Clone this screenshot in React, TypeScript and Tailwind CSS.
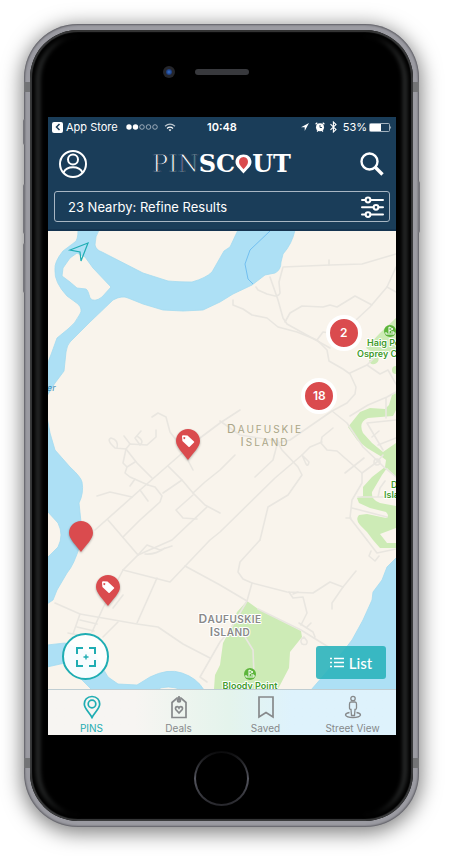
import React from "react";

const ROADS = [
  "M396 254 L362 264 L330 265 L283 267 L279 282 L280 293 Q279 296 275 296 L267 294 L258 290 L256 287",
  "M329 260 V265",
  "M270 277 L278 300 L283 318 L287 324 L330 348",
  "M233 300 V305 L243 309 L252 315 L267 318 L278 327 L297 332 L317 340 L327 350 L329 361 L343 369 L350 374 L356 387 L355 394 L347 403 L332 411 L290 440 L278 443",
  "M396 267 L387 287 L370 307 L356 320",
  "M387 287 L396 292",
  "M372 305 L355 296 L337 307 L330 305 L323 307 L302 306 L290 313 L285 322",
  "M317 340 L323 332 L330 333",
  "M350 373 L367 365 L374 358 M367 365 L380 374 L388 370 L396 384",
  "M332 411 L347 423 L363 447 L385 468 L396 477",
  "M350 416 L368 405 L387 397 L396 392",
  "M386 398 V418",
  "M396 420 L367 423 L383 450",
  "M378 445 L396 438 M372 437 L379 431",
  "M333 428 L322 437 L321 443 L327 450 L337 451 L362 473 L362 483 L352 500 L350 518 L367 540",
  "M345 473 L364 458",
  "M362 473 L377 462 L383 455",
  "M352 508 L387 517 M346 518 H351",
  "M358 497 H396 M378 497 L380 488 L385 481",
  "M322 442 L310 447 L302 455 L275 478 L220 532 L210 540 L170 582 L123 570",
  "M302 455 L306 464 Q308 467 309 462 L303 456",
  "M157 578 L137 623",
  "M185 566 L220 585 L247 601",
  "M55 603 L80 614 L137 624 L158 627 L183 644 L210 658",
  "M247 601 L230 630 L220 642 L200 677 L207 682",
  "M240 410 L220 423 L200 438 L180 455 L140 490 L95 530",
  "M108 520 L138 555",
  "M123 570 L138 555 L172 540 L207 507",
  "M123 537 L140 520 L160 502 L162 496 L155 487 L148 485",
  "M168 466 L182 480 L193 493 L205 505 L220 513",
  "M193 493 L205 482 L220 470 L235 455",
  "M182 480 L163 493",
  "M197 519 L183 518 L176 510 L193 495",
  "M152 417 L158 413 L166 417 L170 432 L180 445 L193 470",
  "M152 478 L137 463 L126 449 L115 448 Q106 440 111 438 Q119 440 117 448",
  "M126 449 L130 444 L147 445 L156 437 V430",
  "M124 436 L130 444 M141 431 L135 438 L140 445 Q145 441 137 436",
  "M126 449 L123 463 L127 467 L125 473 L130 477 L148 485 M127 467 L135 462 M130 486 L135 479",
  "M97 496 L110 492 L132 497",
  "M140 490 L148 501",
  "M123 570 L103 608 L92 632 M123 595 L113 608",
  "M80 614 L73 634 L90 637 M80 620 L97 624 M77 627 L94 631 M68 633 L73 634",
  "M118 622 L103 637",
  "M138 555 L147 545 L160 550 L172 546 M145 554 Q155 555 165 548",
  "M260 540 L240 562 L238 572 L243 579 L252 583 L247 601",
  "M260 540 L268 507 L288 495 L302 475 L298 467 L282 450 L278 443",
  "M220 421 L240 435 L278 441 L273 460 L255 477",
  "M252 583 L287 592 L313 593 L330 582 L343 587 L356 571",
  "M343 587 L332 603 V609",
  "M289 592 L293 598 L303 597 L307 613 L301 625 M293 594 L298 592",
  "M258 609 L301 630 L330 648 M299 623 L313 632 L315 637 M307 627 L311 623",
  "M304 637 Q299 640 302 644 Q308 646 307 641 L304 637",
  "M367 540 L377 553 L396 549 M371 551 L369 556 L375 561 L379 556",
  "M245 637 L253 650 L254 675",
];

const teal = "#1fadb3";

function MapDrawing() {
  return (
    <svg viewBox="48 231 348 458" className="block w-full" aria-label="Map of Daufuskie Island" role="img">
      <rect x="48" y="231" width="348" height="458" fill="#f9f4ec" />
      <g fill="#cdebb6">
        <path d="M396 318 L380 333 L366 348 L372 352 L396 352Z" />
        <ellipse cx="374" cy="360" rx="5" ry="4" transform="rotate(-35 374 360)" />
        <circle cx="396" cy="370" r="4" />
        <path d="M396 393 L392 395 L389 405 L385 409 L370 408 L360 412 L348 427 L357 440 L367 448 L382 457 L386 460 L385 467 L372 477 L363 487 L363 496 L357 498 L359 503 L370 508 L386 512 Q390 516 386 518 L367 514 L359 515 Q355 519 360 525 L367 532 L373 540 L380 548 L396 548 V543 L387 543 L380 534 L396 528 V506 L380 503 Q371 500 372 492 L382 475 L387 468 L396 477 V443 L383 452 L372 443 L363 433 Q358 422 368 418 L393 416 L396 410Z" />
        <path d="M247 601 L258 609 L301 631 L302 637 L290 652 L289 668 L278 689 H214 L215 675 L220 665 L223 643 L230 630 L237 612Z" />
      </g>
      <g stroke="#e9e6e0" strokeWidth="1.6" fill="none" strokeLinejoin="round" strokeLinecap="round">
        {ROADS.map((d) => (
          <path key={d} d={d} />
        ))}
        <circle cx="377" cy="462" r="3" />
      </g>
      <g fill="#ade0f5" stroke="#a3daf0" strokeWidth="0.8" strokeLinejoin="round">
        <path
          fillRule="evenodd"
          d="M78 230 Q78 240 75 242 L63 251 Q54 262 55 270 Q54 282 67 296 L78 304 Q83 309 80 314 Q75 324 68 329 L57 338 L52 352 L47 365 V396 L55 383 L64 371 L66 352 Q67 345 70 342 L90 322 L113 300 Q122 295 128 298 L143 304 L163 310 L183 311 L203 310 L220 302 L233 294 L252 285 L265 275 L275 273 Q281 270 281 262 L283 254 Q292 244 295 230 H238 L230 247 L224 251 L212 272 Q206 278 192 282 Q178 282 168 281 L143 273 L102 252 Q96 250 95 245 Q95 236 99 230Z M77 253 L85 257 L93 268 L111 287 L102 297 Q94 303 90 298 Q88 290 86 289 L77 288 L70 282 L62 276 L63 268 L70 258Z"
        />
        <path d="M47 417 L50 433 L55 450 L70 467 Q81 477 82 482 Q84 493 79 503 L81 522 L80 545 Q74 565 67 573 L57 590 L53 600 L47 604 V558 L58 547 Q64 535 58 523 L47 511Z" />
        <path d="M47 645 L65 643 L95 655 L108 677 L118 684 L137 685 L150 677 Q168 668 182 673 Q197 678 204 690 H182 Q168 684 155 690 H92 L80 678 L65 663 L47 667Z" />
        <path d="M397 557 L387 567 L382 580 L373 592 L372 600 L363 620 L352 640 L330 668 L311 690 H397Z" />
      </g>
      <path d="M270 231 L250 250 L245 264 L248 279 L253 284" fill="none" stroke="#72bff0" strokeWidth="1" />
      <path d="M88 243 L70 250 L80 252 L81 261Z" fill="none" stroke={teal} strokeWidth="1.2" />
      <text x="47" y="391" fontSize="9" fontStyle="italic" className="fill-[#3d91bd] font-['Inter',sans-serif]">er</text>

      <g className="fill-[#aaa688] font-['Inter',sans-serif]" textAnchor="middle" letterSpacing="2">
        <text x="265" y="433" fontSize="10"><tspan fontSize="12">D</tspan>AUFUSKIE</text>
        <text x="265" y="446" fontSize="10"><tspan fontSize="12">I</tspan>SLAND</text>
      </g>
      <g className="fill-[#898989] font-['Inter',sans-serif]" textAnchor="middle" letterSpacing="0.5" fontWeight="600" stroke="#ffffff" strokeWidth="2" strokeLinejoin="round" paintOrder="stroke">
        <text x="230" y="623" fontSize="10"><tspan fontSize="12">D</tspan>AUFUSKIE</text>
        <text x="230" y="636" fontSize="10"><tspan fontSize="12">I</tspan>SLAND</text>
      </g>
      <g className="fill-[#3f9b2b] font-['Inter',sans-serif]" fontSize="9" fontWeight="600" stroke="#ffffff" strokeWidth="2" strokeLinejoin="round" paintOrder="stroke">
        <text x="367" y="346">Haig Point</text>
        <text x="357" y="357">Osprey Club</text>
        <text x="391" y="488">D</text>
        <text x="384" y="498">Island</text>
        <text x="250" y="689" textAnchor="middle">Bloody Point</text>
      </g>
      {[[390, 331], [250, 674]].map(([x, y]) => (
        <g key={x}>
          <circle cx={x} cy={y} r="6" fill="#5db53b" />
          <path d={`M${x - 1} ${y + 2} V${y - 4} L${x + 3} ${y - 2} L${x - 1} ${y} M${x - 4} ${y + 1} V${y + 3} H${x + 4} V${y + 1} H${x + 1}`} fill="none" stroke="white" strokeWidth="1" />
        </g>
      ))}
    </svg>
  );
}

function Pin({ className, tag, label }: { className: string; tag?: boolean; label: string }) {
  return (
    <button aria-label={label} className={`absolute -translate-x-1/2 ${className}`}>
      <svg width="24" height="31" viewBox="0 0 24 31" className="block drop-shadow-[0_1px_1px_rgba(0,0,0,0.3)]">
        <path d="M12 0 C5.400 0 0 5.300 0 12 C0 18 7 24 12 31 C17 24 24 18 24 12 C24 5.300 18.600 0 12 0Z" fill="#da4b4e" />
        {tag && (
          <path fillRule="evenodd" fill="white" d="M6 7.500 Q6 6.300 7.200 6.300 L11.500 6.500 L18 12.500 Q18.500 13 18 13.600 L13.700 17.800 Q13 18.400 12.500 17.800 L6.400 12 Z M8.300 8 a1 1 0 1 0 0.010 0Z" />
        )}
      </svg>
    </button>
  );
}

function Cluster({ count, className }: { count: number; className: string }) {
  return (
    <button
      aria-label={`${count} pins`}
      className={`absolute flex size-9 -translate-x-1/2 items-center justify-center rounded-full border-4 border-white bg-[#da4b4e] text-[12px] leading-4 font-semibold text-white ${className}`}
    >
      {count}
    </button>
  );
}

function StatusBar() {
  return (
    <div className="grid h-5 grid-cols-[1fr_auto_1fr] items-center px-1 text-[11px] leading-4">
      <div className="flex items-center">
        <span className="flex size-[11px] items-center justify-center rounded-[2px] bg-white">
          <svg width="6" height="8" viewBox="0 0 6 8" fill="none" stroke="#1a3d59" strokeWidth="1.500"><path d="M4.500 1 L1.500 4 L4.500 7" /></svg>
        </span>
        <a href="#" className="ml-[3px]">App Store</a>
        <svg width="33" height="6" viewBox="0 0 33 6" className="ml-[8px]">
          {[3, 9.500].map((x) => <circle key={x} cx={x} cy="3" r="2.700" fill="white" />)}
          {[16, 22.500, 29].map((x) => <circle key={x} cx={x} cy="3" r="2.300" fill="none" stroke="#cbd4dc" strokeWidth="0.700" />)}
        </svg>
        <svg width="12" height="9" viewBox="0 0 12 9" className="ml-[5px]" fill="none" stroke="white" strokeWidth="1.300">
          <path d="M1 3.200 Q6 -1 11 3.200" opacity="0.700" />
          <path d="M3 5.400 Q6 3 9 5.400" />
          <path d="M4.600 6.800 Q6 5.700 7.400 6.800 L6 8.300Z" fill="white" stroke="none" />
        </svg>
      </div>
      <span className="font-semibold">10:48</span>
      <div className="flex items-center justify-end">
        <svg width="8" height="8" viewBox="0 0 8 8" className="mr-[6px]"><path d="M8 0 L0 4.300 H3.700 V8Z" fill="white" /></svg>
        <svg width="10" height="10" viewBox="0 0 10 10" className="mr-[5px]">
          <circle cx="5" cy="5.200" r="4" fill="white" />
          <path d="M5 3 V5.500 H7" stroke="#1a3d59" fill="none" strokeWidth="0.900" />
          <path d="M0.600 2.300 L2.300 0.700 M9.400 2.300 L7.700 0.700 M2 9.500 L3 8.500 M8 9.500 L7 8.500" stroke="white" strokeWidth="1.200" />
        </svg>
        <svg width="7" height="12" viewBox="0 0 7 12" className="mr-[6px]" fill="none" stroke="white" strokeWidth="1.100"><path d="M0.500 3.200 L6 8.600 L3.400 11 V1 L6 3.400 L0.500 8.800" /></svg>
        <span>53%</span>
        <svg width="23" height="9" viewBox="0 0 23 9" className="ml-[2px]">
          <rect x="0.500" y="0.500" width="20" height="8" rx="1" fill="none" stroke="#b3bfca" strokeWidth="0.900" />
          <rect x="1" y="1" width="11" height="7" fill="white" />
          <path d="M21.300 2.800 Q23 4.500 21.300 6.200Z" fill="#d0d8df" />
        </svg>
      </div>
    </div>
  );
}

function Logo() {
  return (
    <h1 className="flex items-center font-['DejaVu_Serif',serif] text-[24px] leading-7">
      <span className="[-webkit-text-stroke:1px_#1a3d59]">PIN</span>
      <span className="font-bold">SC</span>
      <svg width="17" height="20" viewBox="0 0 17 20" aria-label="O" role="img">
        <path d="M8.500 0.500 C3.500 0.500 0.500 4 0.500 8 C0.500 12.500 5 15 8.500 19.500 C12 15 16.500 12.500 16.500 8 C16.500 4 13.500 0.500 8.500 0.500Z" fill="white" />
        <path d="M8.500 3 C5.500 3 4 5.200 4 8 C4 11 6.500 12.500 8.500 15.300 C10.500 12.500 13 11 13 8 C13 5.200 11.500 3 8.500 3Z" fill="#da4b4e" />
      </svg>
      <span className="font-bold">UT</span>
    </h1>
  );
}

function Header() {
  return (
    <header className="border-b-2 border-[#153450] bg-[#1a3d59] pb-[7px] text-white">
      <StatusBar />
      <div className="grid h-[54px] grid-cols-[28px_1fr_28px] items-center pr-3 pl-[11px]">
        <button aria-label="Profile">
          <svg width="28" height="28" viewBox="0 0 28 28" className="block" fill="none" stroke="white" strokeWidth="2">
            <circle cx="14" cy="14" r="13" />
            <circle cx="14" cy="9.500" r="5" />
            <path d="M4.500 22.500 Q7 17.300 14 17.300 Q21 17.300 23.500 22.500" />
          </svg>
        </button>
        <div className="flex justify-center">
          <Logo />
        </div>
        <button aria-label="Search" className="justify-self-end">
          <svg width="24" height="24" viewBox="0 0 24 24" className="block" fill="none" stroke="white">
            <circle cx="9.500" cy="9.500" r="8" strokeWidth="2.400" />
            <path d="M15 15 L22.500 22.500" strokeWidth="3.400" />
          </svg>
        </button>
      </div>
      <button className="mx-[6px] flex h-[31px] w-[calc(100%-12px)] items-center justify-between rounded-[3px] border border-[#a8b6c3] pr-[5px] pl-[13px] text-[13px] leading-4">
        <span>23 Nearby: Refine Results</span>
        <svg width="23" height="22" viewBox="0 0 23 22" fill="none" stroke="white" strokeWidth="2" strokeLinecap="round">
          <path d="M1 4 H4.500 M9.500 4 H22 M1 11.300 H12.500 M17.500 11.300 H22 M1 18.600 H4.500 M9.500 18.600 H22" />
          <circle cx="7" cy="4" r="2.400" />
          <circle cx="15" cy="11.300" r="2.400" />
          <circle cx="7" cy="18.600" r="2.400" />
        </svg>
      </button>
    </header>
  );
}

const TABS = [
  {
    label: "PINS",
    icon: (
      <>
        <path d="M12 1.500 C7 1.500 4.300 5 4.300 9 C4.300 13.500 9 17 12 22.500 C15 17 19.700 13.500 19.700 9 C19.700 5 17 1.500 12 1.500Z" />
        <circle cx="12" cy="9" r="3.800" />
      </>
    ),
  },
  {
    label: "Deals",
    icon: (
      <>
        <path d="M5 22.500 V7.500 L10 3 H14 L19 7.500 V22.500Z" />
        <path d="M12 7 V1" />
        <circle cx="12" cy="5.500" r="1.500" />
        <path d="M12 18 L8.800 14.500 C7.500 12 10.700 10.500 12 13 C13.300 10.500 16.500 12 15.200 14.500Z" />
      </>
    ),
  },
  { label: "Saved", icon: <path d="M5 2 H19 V22 L12 17.500 L5 22Z" /> },
  {
    label: "Street View",
    icon: (
      <g strokeWidth="1.300">
        <circle cx="12" cy="3.500" r="2.200" />
        <path d="M10 7 H14 Q15.500 7 15.500 9 V13 Q15.500 14.500 14 14.500 L13.500 20.500 H10.500 L10 14.500 Q8.500 14.500 8.500 13 V9 Q8.500 7 10 7Z" />
        <path d="M8.500 17.500 Q4.500 18.300 4.500 20 Q5.500 22.500 12 22.500 Q18.500 22.500 19.500 20 Q19.500 18.300 15.500 17.500" />
      </g>
    ),
  },
];

function TabBar() {
  return (
    <nav className="grid h-[46px] grid-cols-4 border-t border-[#bfcdd2] bg-linear-to-r from-[#f7f5f2] from-25% via-[#e4f4ec] via-52% to-[#def2fc] to-70%">
      {TABS.map((tab, i) => (
        <button key={tab.label} className={`flex flex-col items-center pt-[5px] text-[10px] leading-3 ${i === 0 ? "text-[#1fadb3]" : "text-[#86898b]"}`}>
          <svg width="24" height="24" viewBox="0 0 24 24" fill="none" stroke="currentColor" strokeWidth="1.700">{tab.icon}</svg>
          <span className="mt-[3px]">{tab.label}</span>
        </button>
      ))}
    </nav>
  );
}

function MapView() {
  return (
    <main className="relative overflow-hidden">
      <MapDrawing />
      <Cluster count={2} className="top-[18.400%] left-[85%]" />
      <Cluster count={18} className="top-[32%] left-[78%]" />
      <Pin label="Deal pin" tag className="top-[43.200%] left-[40.200%]" />
      <Pin label="Pin" className="top-[63.300%] left-[9.500%]" />
      <Pin label="Deal pin" tag className="top-[75.100%] left-[17.200%]" />
      <button aria-label="Centre map" className="absolute bottom-[9px] left-[14px] flex size-[47px] items-center justify-center rounded-full border-2 border-[#1fadb3] bg-white/90">
        <svg width="20" height="20" viewBox="0 0 20 20" fill="none" stroke={teal} strokeWidth="2">
          <path d="M1 7 V1 H7 M13 1 H19 V7 M19 13 V19 H13 M7 19 H1 V13" />
          <path d="M10 7.500 V12.500 M7.500 10 H12.500" strokeWidth="1.400" />
        </svg>
      </button>
      <button className="absolute right-[10px] bottom-[10px] flex h-[33px] w-[70px] items-center justify-center gap-[5px] rounded-[3px] bg-[#2bb4bc]/90 font-['Lato',sans-serif] text-[15px] leading-5 font-medium text-white">
        <svg width="14" height="11" viewBox="0 0 14 11" stroke="white" strokeWidth="1.600">
          <path d="M0 1.500 H2 M4 1.500 H14 M0 5.500 H2 M4 5.500 H14 M0 9.500 H2 M4 9.500 H14" />
        </svg>
        List
      </button>
    </main>
  );
}

export default function App() {
  return (
    <div className="min-h-screen bg-white pt-6 pr-[31px] pb-[29px] pl-6 font-['Inter',sans-serif]">
      <div className="relative rounded-[54px] bg-[#9b9ba2] p-[6px] shadow-[0_4px_20px_2px_rgba(0,0,0,0.5),inset_0_0_2px_1px_#5c5c62]">
        <span className="absolute top-[95px] -left-px h-[26px] w-[2px] rounded-l-sm bg-[#77777d]" />
        <span className="absolute top-[160px] -left-px h-[50px] w-[2px] rounded-l-sm bg-[#77777d]" />
        <span className="absolute top-[219px] -left-px h-[50px] w-[2px] rounded-l-sm bg-[#77777d]" />
        <span className="absolute top-[157px] -right-px h-[52px] w-[2px] rounded-r-sm bg-[#77777d]" />
        <span className="absolute inset-x-0 top-[58px] h-[10px] bg-[#737476]" />
        <span className="absolute inset-x-0 bottom-[59px] h-[10px] bg-[#737476]" />
        <div className="relative overflow-hidden rounded-[48px] bg-black shadow-[inset_0_0_1px_2px_#3a3b3c]">
          <span className="pointer-events-none absolute inset-[6px] rounded-[44px] border-x-4 border-[#303232] blur-[2px]" />
          <div className="relative grid h-[87px] grid-cols-[1fr_auto_1fr] items-center pb-1 shadow-[inset_0_2px_1px_#333]">
            <span className="mr-5 flex size-3 items-center justify-center justify-self-end rounded-full bg-[#25262b]">
              <span className="size-[6px] rounded-full bg-radial from-[#3672d0] to-[#10204f]" />
            </span>
            <span className="h-[6px] w-[54px] rounded-full bg-[#38393d]" />
          </div>
          <div className="relative mr-[17px] ml-[18px] overflow-hidden">
            <Header />
            <MapView />
            <TabBar />
          </div>
          <div className="relative flex h-[86px] items-center justify-center">
            <button aria-label="Home" className="size-[55px] rounded-full bg-linear-to-b from-[#09090a] via-[#55565f] to-[#26262b] p-[2px]">
              <span className="block size-full rounded-full bg-black" />
            </button>
          </div>
        </div>
      </div>
    </div>
  );
}
